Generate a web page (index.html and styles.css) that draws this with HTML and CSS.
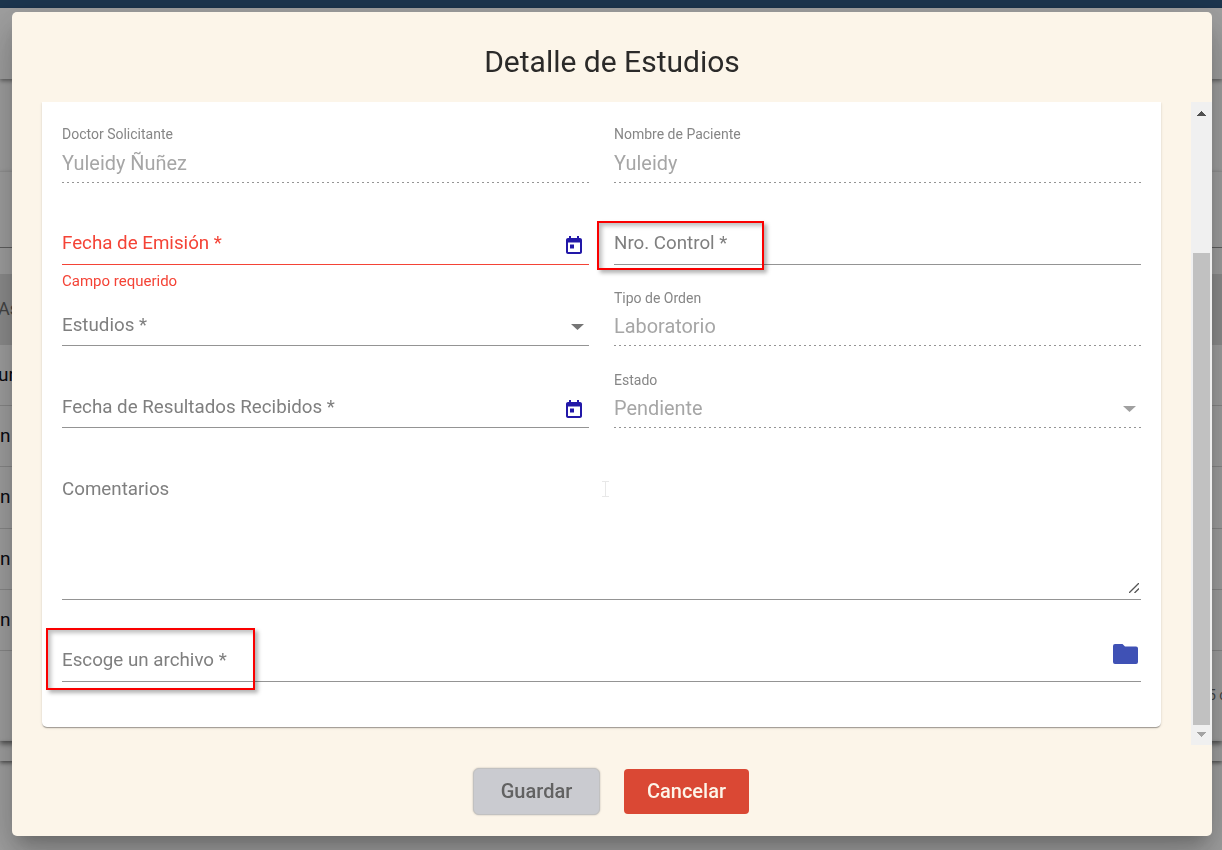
FILE: index.html
```html
<!DOCTYPE html>
<html lang="es">
<head>
<meta charset="utf-8">
<title>Detalle de Estudios</title>
<link rel="stylesheet" href="styles.css">
</head>
<body>
<div class="page">
  <div class="topbar"></div>
  <div class="subbar"></div>
  <div class="spacer"></div>
  <div class="table">
    <div class="filter"></div>
    <div class="gap"></div>
    <div class="thead">As</div>
    <div class="tr first">ur</div>
    <div class="tr">n</div>
    <div class="tr tall">n</div>
    <div class="tr">n</div>
    <div class="tr">n</div>
    <div class="paginator"><span>5 c</span></div>
  </div>
  <div class="panel-end"></div>
</div>
<div class="backdrop">
  <div class="dialog" role="dialog">
    <h1 class="title">Detalle de Estudios</h1>
    <div class="body">
      <form class="card">
        <div class="field disabled">
          <label class="float">Doctor Solicitante</label>
          <span class="value">Yuleidy Ñuñez</span>
        </div>
        <div class="field disabled">
          <label class="float">Nombre de Paciente</label>
          <span class="value">Yuleidy</span>
        </div>
        <div class="field error">
          <label class="label">Fecha de Emisión *</label>
          <svg class="cal" viewBox="0 0 16 18"><path d="M14 2h-1V0h-2v2H5V0H3v2H2C.9 2 0 2.900 0 4v12c0 1.100.9 2 2 2h12c1.100 0 2-.9 2-2V4c0-1.100-.9-2-2-2zm0 14H2V6.500h12zM4 8.500h4v4H4z"/></svg>
          <span class="message">Campo requerido</span>
        </div>
        <div class="field">
          <label class="label">Nro. Control *</label>
          <div class="mark mark-control"></div>
        </div>
        <div class="field">
          <label class="label low">Estudios *</label>
          <svg class="caret" viewBox="0 0 13 6"><path d="M0 0h13L6.500 6z"/></svg>
        </div>
        <div class="field disabled">
          <label class="float low">Tipo de Orden</label>
          <span class="value">Laboratorio</span>
        </div>
        <div class="field">
          <label class="label low">Fecha de Resultados Recibidos *</label>
          <svg class="cal low" viewBox="0 0 16 18"><path d="M14 2h-1V0h-2v2H5V0H3v2H2C.9 2 0 2.900 0 4v12c0 1.100.9 2 2 2h12c1.100 0 2-.9 2-2V4c0-1.100-.9-2-2-2zm0 14H2V6.500h12zM4 8.500h4v4H4z"/></svg>
        </div>
        <div class="field disabled">
          <label class="float low">Estado</label>
          <span class="value">Pendiente</span>
          <svg class="caret" viewBox="0 0 13 6"><path d="M0 0h13L6.500 6z"/></svg>
        </div>
        <div class="field area">
          <label class="label">Comentarios</label>
          <svg class="ibeam" viewBox="0 0 7 16"><path d="M0 .5h7M3.500 .5v15M0 15.500h7"/></svg>
          <svg class="grip" viewBox="0 0 10 10"><path d="M0 10L10 0M5.500 10L10 5.500"/></svg>
        </div>
        <div class="field file">
          <label class="label">Escoge un archivo *</label>
          <svg class="folder" viewBox="0 0 25 20"><path d="M2 0h7.500l2.500 2.500h11a2 2 0 0 1 2 2V18a2 2 0 0 1-2 2H2a2 2 0 0 1-2-2V2a2 2 0 0 1 2-2z"/></svg>
          <div class="mark mark-file"></div>
        </div>
      </form>
      <div class="scrollbar">
        <svg class="arrow" viewBox="0 0 9 5"><path d="M0 5h9L4.500 0z"/></svg>
        <div class="thumb"></div>
        <svg class="arrow down" viewBox="0 0 9 5"><path d="M0 0h9L4.500 5z"/></svg>
      </div>
    </div>
    <div class="actions">
      <button class="btn save" disabled>Guardar</button>
      <button class="btn cancel">Cancelar</button>
    </div>
  </div>
</div>
</body>
</html>
```
FILE: styles.css
```css
* { box-sizing: border-box; }
body { margin: 0; height: 850px; overflow: hidden; font-family: Roboto, sans-serif; }
svg { display: block; }

/* page underneath the dialog */
.page { height: 850px; display: flex; flex-direction: column; background: #ececec; }
.topbar { height: 8px; background: #2a4f74; }
.subbar { height: 71px; background: #ececec; box-shadow: 0 2px 4px rgba(0,0,0,.4); }
.spacer { height: 92px; }
.table { height: 570px; background: #ececec; border-top: 1px solid #d8d8d8; box-shadow: 0 3px 5px rgba(0,0,0,.5); }
.filter { height: 76px; border-bottom: 1px solid #8d8d8d; }
.gap { height: 26px; }
.thead { height: 71px; line-height: 69px; background: #d0d0d0; color: #666; font-size: 18px; text-indent: -2px; }
.tr { height: 61px; line-height: 60px; border-bottom: 1px solid #c9c9c9; font-size: 19px; color: #101018; }
.tr.first { text-indent: -2px; }
.tr.tall { height: 62px; }
.paginator { height: 89px; line-height: 88px; display: flex; justify-content: flex-end; color: #666; font-size: 14px; }
.paginator span { width: 14px; white-space: nowrap; }
.panel-end { height: 20px; box-shadow: 0 2px 4px rgba(0,0,0,.5); }

/* dialog */
.backdrop { position: fixed; inset: 0; padding: 12px 10px 14px 12px; background: rgba(0,0,0,.32); }
.dialog {
  width: 1200px; height: 824px; border-radius: 5px; background: #fcf5e9;
  display: flex; flex-direction: column;
  box-shadow: 0 11px 15px -7px rgba(0,0,0,.2), 0 24px 38px 3px rgba(0,0,0,.14), 0 9px 46px 8px rgba(0,0,0,.12);
}
.title { margin: 0; height: 90px; line-height: 100px; text-align: center; font-weight: 400; font-size: 30px; color: #2b2a29; }
.body { height: 644px; overflow: hidden; display: flex; justify-content: space-between; padding-left: 30px; }
.card {
  width: 1119px; height: 625px; padding: 0 20px; background: #fff; border-radius: 0 0 5px 5px;
  display: grid; grid-template-columns: 527px 527px; column-gap: 25px;
  grid-template-rows: 81px 82px 81px 82px 172px 82px;
  box-shadow: 0 2px 1px -1px rgba(0,0,0,.2), 0 1px 1px rgba(0,0,0,.14), 0 1px 3px rgba(0,0,0,.12);
}
.field { position: relative; display: flex; align-items: flex-end; justify-content: space-between; border-bottom: 1px solid #949494; color: #7f7f7f; }
.label { font-size: 18.750px; line-height: 24px; margin-bottom: 9px; white-space: nowrap; }
.label.low { margin-bottom: 8px; }
.disabled {
  border-bottom: 0; padding-bottom: 1px; color: #a6a6a6;
  background: repeating-linear-gradient(to right, #949494 0 2px, transparent 2px 5px) bottom / 100% 1px no-repeat;
}
.float { position: absolute; left: 0; bottom: 40px; font-size: 14px; line-height: 18px; color: #868686; }
.float.low { bottom: 39px; }
.value { font-size: 19.900px; line-height: 24px; margin-bottom: 6px; }
.error { border-color: #f44336; color: #f44336; }
.message { position: absolute; left: 0; bottom: -26px; font-size: 15px; line-height: 18px; }
.cal { width: 16px; height: 18px; margin: 0 7px 10px 0; fill: #2218a8; }
.cal.low { margin-bottom: 9px; }
.caret { width: 13px; height: 6px; margin: 0 5px 15px 0; fill: #757575; }
.disabled .caret { fill: #a0a0a0; }
.area, .file { grid-column: span 2; }
.area .label { align-self: flex-start; margin: 49px 0 0; }
.ibeam { position: absolute; left: 540px; top: 53px; width: 7px; height: 16px; fill: none; stroke: #e8e8e8; }
.grip { width: 10px; height: 10px; margin: 0 2px 6px 0; stroke: #555; stroke-width: 1.300; }
.folder { width: 25px; height: 20px; margin: 0 3px 17px 0; fill: #3f51b5; }

/* highlighted areas */
.mark { position: absolute; border: 2px solid #fa0000; box-shadow: 3px 3px 4px rgba(0,0,0,.3), inset 3px 3px 4px rgba(0,0,0,.25); }
.mark-control { left: -17px; top: 38px; width: 167px; height: 49px; }
.mark-file { left: -16px; top: 28px; width: 209px; height: 62px; }

.scrollbar { width: 21px; height: 643px; padding: 9px 2px 5px; background: #f0f0f0; display: flex; flex-direction: column; align-items: center; }
.thumb { width: 17px; height: 472px; margin-top: 137px; background: #c1c1c1; }
.arrow { width: 9px; height: 5px; fill: #505050; shape-rendering: crispEdges; }
.arrow.down { margin-top: 7px; fill: #a3a3a3; }

.actions { display: flex; justify-content: center; align-items: center; gap: 24px; padding: 22px 2px 0 0; }
.btn { border: 0; padding: 0 0 1px; font: 500 20px Roboto, sans-serif; border-radius: 4px; }
.save { width: 127px; height: 47px; background: #cacbd0; color: #626262; border: 1px solid #c1c1c1; border-radius: 6px; box-shadow: 0 0 2px rgba(0,0,0,.25); }
.cancel { width: 125px; height: 45px; background: #da4834; color: #fdf5e9; }
```
